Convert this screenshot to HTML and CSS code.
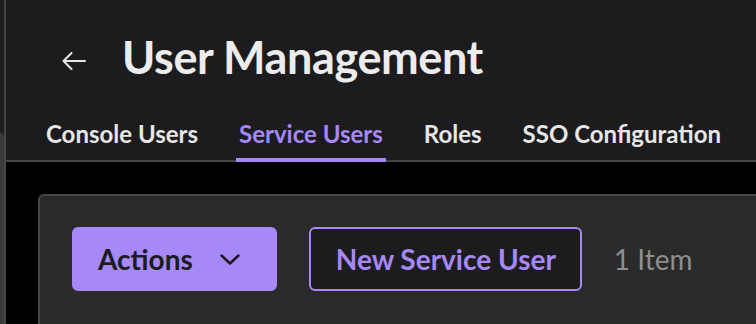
FILE: index.html
```html
<!DOCTYPE html>
<html lang="en">
<head>
  <meta charset="UTF-8">
  <title>User Management</title>
  <link rel="stylesheet" href="styles.css">
</head>
<body>
  <div class="rail">
    <div class="rail-block"></div>
  </div>
  <div class="main">
    <div class="header">
      <div class="title-row">
        <a class="back" href="#">
          <svg width="24" height="18" viewBox="0 0 24 18" fill="none" stroke="#e6e6e6" stroke-width="2" stroke-linecap="round" stroke-linejoin="round">
            <path d="M23 9H1.5M9.5 1L1.5 9l8 8"/>
          </svg>
        </a>
        <h1>User Management</h1>
      </div>
      <div class="tabs">
        <div class="tab">Console Users</div>
        <div class="tab active">Service Users</div>
        <div class="tab">Roles</div>
        <div class="tab">SSO Configuration</div>
      </div>
    </div>

    <div class="content">
      <div class="card">
        <div class="toolbar">
          <button class="btn btn-primary">
            Actions
            <svg width="20" height="11" viewBox="0 0 20 11" fill="none" stroke="#1c1c1e" stroke-width="2.5" stroke-linecap="round" stroke-linejoin="round">
              <path d="M1.5 1.5L10 9.5 18.5 1.5"/>
            </svg>
          </button>
          <button class="btn btn-outline">New Service User</button>
          <span class="count">1 Item</span>
        </div>
      </div>
    </div>
  </div>
</body>
</html>
```

FILE: styles.css
```css
body {
  margin: 0;
  padding: 0;
  display: flex;
  height: 100vh;
  overflow: hidden;
  background-color: #000;
  font-family: Lato, "Open Sans", sans-serif;
}

.rail {
  width: 4px;
  flex-shrink: 0;
  background-color: #1e1e20;
  border-right: 2px solid #454547;
  padding-top: 133px;
}

.rail-block {
  height: 100%;
  background-color: #3a3a3c;
  border-top-right-radius: 4px;
}

.main {
  flex-shrink: 0;
  width: 1100px;
}

.header {
  background-color: #1c1c1e;
  border-bottom: 2px solid #454547;
  padding: 30px 0 0 37px;
}

.title-row {
  display: flex;
  align-items: center;
  height: 54px;
}

.back {
  display: flex;
  margin-left: 19px;
  margin-right: 36px;
  margin-top: 8px;
}

h1 {
  margin: 0;
  font-size: 45px;
  font-weight: 700;
  color: #ececec;
  letter-spacing: -0.4px;
}

.tabs {
  display: flex;
  gap: 35px;
  margin-top: 35px;
  margin-bottom: -2px;
}

.tab {
  position: relative;
  padding: 0 3px 10px;
  border-bottom: 4px solid transparent;
  font-size: 24px;
  font-weight: 700;
  color: #e6e6e6;
  cursor: pointer;
}

.tab.active {
  color: #a688f7;
  border-bottom-color: #a688f7;
}

.content {
  padding: 32px 0 0 32px;
}

.card {
  height: 300px;
  background-color: #2a2a2a;
  border: 2px solid #464646;
  border-radius: 6px;
  padding: 31px 32px;
}

.toolbar {
  display: flex;
  align-items: center;
}

.btn {
  display: flex;
  align-items: center;
  height: 64px;
  border-radius: 6px;
  border: 2px solid #a688f7;
  font-family: Lato, "Open Sans", sans-serif;
  font-size: 28px;
  font-weight: 700;
  cursor: pointer;
}

.btn-primary {
  background-color: #a688f7;
  color: #1c1c1e;
  padding: 0 35px 0 24px;
  gap: 27px;
  margin-right: 32px;
}

.btn-outline {
  background-color: #1c1c1e;
  color: #a688f7;
  padding: 0 24px 0 25px;
  margin-right: 32px;
}

.count {
  font-size: 28px;
  color: #8e8e90;
}
```
